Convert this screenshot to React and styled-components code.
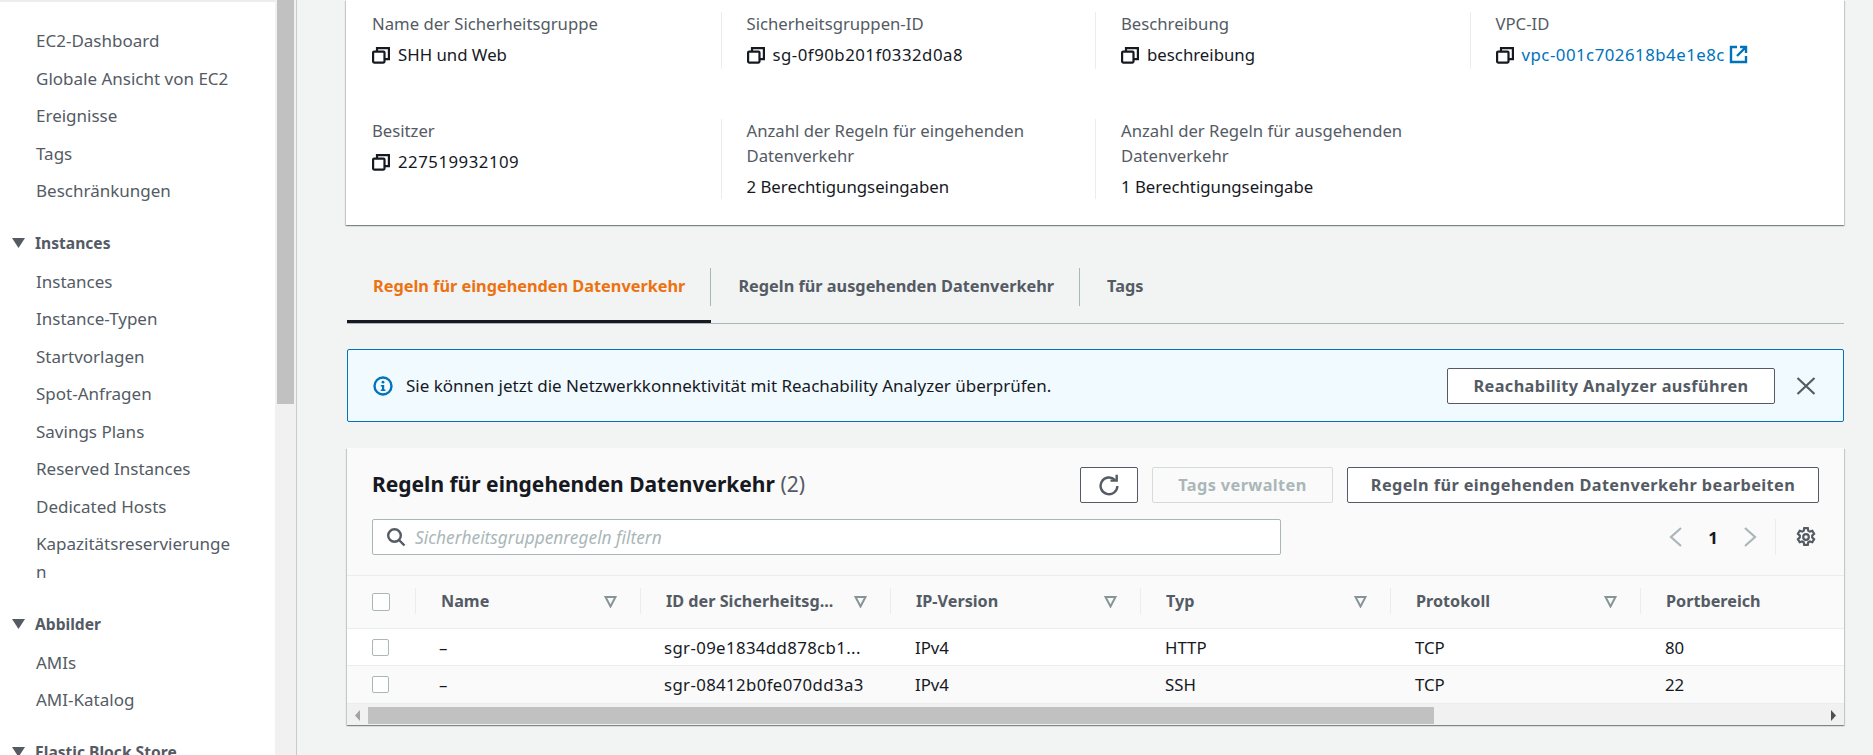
import React from "react";
import styled, { createGlobalStyle } from "styled-components";

const Global = createGlobalStyle`
  html, body {
    margin: 0;
    height: 100%;
    overflow: hidden;
    background: #f2f3f3;
  }
  * { box-sizing: border-box; }
`;

const Page = styled.div`
  display: flex;
  height: 755px;
  overflow: hidden;
  font-family: "Noto Sans", "Liberation Sans", sans-serif;
  font-size: 16.8px;
  color: #16191f;
`;

const Sidebar = styled.nav`
  width: 275px;
  flex-shrink: 0;
  background: #fff;
  border-top: 2px solid #eaeded;
  padding-top: 20px;
  overflow: hidden;
  font-size: 17px;
`;

const SideTrack = styled.div`
  width: 22px;
  flex-shrink: 0;
  background: #f1f1f1;
  border-right: 1px solid #c6cccc;
  padding: 0 2px;
`;

const SideThumb = styled.div`
  height: 404px;
  background: #c1c1c1;
`;

const SideItem = styled.div`
  padding: 5px 0 4.5px 36px;
  width: 231px;
  line-height: 28px;
  color: #545b64;
  overflow-wrap: anywhere;
`;

const SideGroup = styled.div`
  display: flex;
  align-items: center;
  gap: 10px;
  padding-left: 12px;
  margin-top: 19px;
  margin-bottom: 6px;
  height: 28px;
  font-size: 15.6px;
  font-weight: 700;
  color: #545b64;
`;

const Main = styled.main`
  flex: 1;
  min-width: 0;
  padding: 0 29px 0 50px;
`;

const Details = styled.section`
  display: grid;
  grid-template-columns: repeat(4, 1fr);
  row-gap: 50px;
  height: 225px;
  margin-left: -1px;
  padding: 12px 0 0;
  background: #fff;
  box-shadow: 0 1px 1px 0 rgba(0, 28, 36, 0.3), 1px 1px 1px 0 rgba(0, 28, 36, 0.15), -1px 1px 1px 0 rgba(0, 28, 36, 0.15);
  align-content: start;
`;

const Field = styled.div`
  min-height: 57px;
  padding-left: 25px;
  border-left: 1px solid ${(p) => (p.$first ? "transparent" : "#eaeded")};
  line-height: 25px;
`;

const FieldLabel = styled.div`
  margin-top: -1px;
  color: #545b64;
  font-size: 16.7px;
`;

const FieldValue = styled.div`
  display: flex;
  align-items: center;
  gap: 8px;
  margin-top: 6px;
  height: 25px;
`;

const IdText = styled.span`
  letter-spacing: ${(p) => p.$spacing || 0.5}px;
`;

const Link = styled.a`
  color: #0073bb;
  text-decoration: none;
  letter-spacing: 0.5px;
`;

const ExternalWrap = styled.span`
  display: flex;
  margin-left: -4px;
`;

const Tabs = styled.div`
  display: flex;
  margin-top: 35px;
  border-bottom: 1px solid #aab7b8;
  height: 64px;
`;

const Tab = styled.div`
  position: relative;
  padding: 0 26px;
  height: 63px;
  display: flex;
  align-items: center;
  padding-bottom: 8px;
  font-size: 16.3px;
  font-weight: 700;
  color: ${(p) => (p.$active ? "#ec7211" : "#545b64")};
  border-bottom: 3px solid ${(p) => (p.$active ? "#16191f" : "transparent")};
  & + & {
    padding-left: 27px;
  }
  &:not(:last-child)::after {
    content: "";
    position: absolute;
    right: 0;
    top: 8px;
    height: 38px;
    border-right: 1px solid #aab7b8;
  }
`;

const Alert = styled.div`
  display: flex;
  align-items: center;
  height: 73px;
  margin-top: 25px;
  padding: 0 27px 0 25px;
  background: #f1faff;
  border: 1px solid #0073bb;
  border-radius: 2px;
  font-size: 17px;
`;

const AlertText = styled.span`
  margin-left: 13px;
  flex: 1;
`;

const Button = styled.button`
  height: 36px;
  width: ${(p) => p.$width}px;
  padding: 0;
  display: flex;
  align-items: center;
  justify-content: center;
  font: 700 16.3px "Noto Sans", "Liberation Sans", sans-serif;
  letter-spacing: 0.4px;
  color: ${(p) => (p.$disabled ? "#aab7b8" : "#545b64")};
  background: ${(p) => (p.$disabled ? "#fafafa" : "#fff")};
  border: 1px solid ${(p) => (p.$disabled ? "#d5dbdb" : "#545b64")};
  border-radius: 2px;
`;

const CloseButton = styled.span`
  display: flex;
  margin-left: 21px;
`;

const Panel = styled.section`
  margin-top: 26px;
  background: #fafafa;
  box-shadow: 0 1px 1px 0 rgba(0, 28, 36, 0.3), 1px 1px 1px 0 rgba(0, 28, 36, 0.15), -1px 1px 1px 0 rgba(0, 28, 36, 0.15);
  height: 277px;
  overflow: hidden;
`;

const PanelHead = styled.div`
  padding: 19px 25px 20px;
  height: 127px;
`;

const TitleRow = styled.div`
  display: flex;
  align-items: center;
  gap: 14px;
`;

const Title = styled.h2`
  flex: 1;
  margin: 0 0 2px;
  font-size: 21px;
  font-weight: 700;
  color: #16191f;
`;

const Count = styled.span`
  font-weight: 400;
  color: #545b64;
`;

const ToolRow = styled.div`
  display: flex;
  align-items: center;
  margin-top: 16px;
`;

const Search = styled.div`
  display: flex;
  align-items: center;
  gap: 9px;
  width: 909px;
  height: 36px;
  padding-left: 13px;
  background: #fff;
  border: 1px solid #aab7b8;
  border-radius: 2px;
  font-size: 17.3px;
  font-style: italic;
  color: #aab7b8;
`;

const Pager = styled.div`
  display: flex;
  align-items: center;
  margin-left: auto;
  height: 36px;
  width: 150px;
  font-weight: 700;
  color: #16191f;
`;

const PageNumber = styled.span`
  width: 60px;
  text-align: center;
`;

const PagerGap = styled.span`
  height: 36px;
  margin-left: 18px;
  margin-right: 20px;
  border-left: 1px solid #eaeded;
`;

const TableRow = styled.div`
  display: grid;
  grid-template-columns: 68px 225px 250px 250px 250px 250px 203px;
  height: ${(p) => p.$height}px;
  background: ${(p) => p.$bg};
  border-bottom: 1px solid #eaeded;
  align-items: center;
`;

const HeadTop = styled.div`
  border-top: 1px solid #eaeded;
`;

const HeadCell = styled.div`
  display: flex;
  align-items: center;
  justify-content: space-between;
  height: 26px;
  margin-top: -2px;
  padding: 0 23px 0 25px;
  border-left: 1px solid #eaeded;
  font-size: 16.2px;
  font-weight: 700;
  color: #545b64;
  white-space: nowrap;
`;

const Cell = styled.div`
  padding-left: ${(p) => p.$inset || 25}px;
  white-space: nowrap;
`;

const CheckCell = styled.div`
  padding-left: 25px;
  display: flex;
`;

const Check = styled.span`
  display: block;
  width: ${(p) => p.$size}px;
  height: ${(p) => p.$size}px;
  background: #fff;
  border: 1px solid #aab7b8;
  border-radius: 2px;
`;

const HScroll = styled.div`
  display: flex;
  align-items: center;
  height: 22px;
  background: #f1f1f1;
`;

const ScrollArrow = styled.span`
  width: 21px;
  display: flex;
  justify-content: center;
`;

const ScrollThumb = styled.div`
  width: 1066px;
  height: 17px;
  background: #c1c1c1;
`;

const ScrollRest = styled.div`
  flex: 1;
`;

const CopyIcon = () => (
  <svg width="18" height="18" viewBox="0 0 18 18" fill="none" stroke="#16191f" strokeWidth="2.2">
    <rect x="1.1" y="5.6" width="11.4" height="11" rx="1" />
    <path d="M5 5V2.1h11.9v11H12.5" />
  </svg>
);

const ExternalIcon = () => (
  <svg width="19" height="19" viewBox="0 0 19 19" fill="none" stroke="#0073bb" strokeWidth="2.4">
    <path d="M8 2H2v15h15v-6" />
    <path d="M11 2h6v6M17 2L8 11" />
  </svg>
);

const InfoIcon = () => (
  <svg width="20" height="20" viewBox="0 0 20 20">
    <circle cx="10" cy="10" r="8.5" fill="none" stroke="#0073bb" strokeWidth="2.4" />
    <circle cx="10" cy="6.2" r="1.4" fill="#0073bb" />
    <path d="M7.8 9h3.4v4.4h1.2v1.6H7.8v-1.6H9V10.6H7.8z" fill="#0073bb" />
  </svg>
);

const CloseIcon = () => (
  <svg width="20" height="20" viewBox="0 0 20 20" stroke="#545b64" strokeWidth="2.2">
    <path d="M1.5 2l17 16M18.5 2L1.5 18" />
  </svg>
);

const RefreshIcon = () => (
  <svg width="22" height="22" viewBox="0 0 22 22" fill="none" stroke="#545b64" strokeWidth="2.4">
    <path d="M17 6A8.4 8.4 0 1 0 19.4 12" />
    <path d="M12.5 6.6h6.2V0.8" />
  </svg>
);

const SearchIcon = () => (
  <svg width="20" height="20" viewBox="0 0 20 20" fill="none" stroke="#545b64" strokeWidth="2.4">
    <circle cx="8.5" cy="8.5" r="6.3" />
    <path d="M13 13l5.5 5.5" />
  </svg>
);

const Chevron = ({ right }) => (
  <svg width="14" height="22" viewBox="0 0 14 22" fill="none" stroke="#aab7b8" strokeWidth="2.2">
    <path d={right ? "M2 2l10 9-10 9" : "M12 2L2 11l10 9"} />
  </svg>
);

const GearIcon = () => (
  <svg width="20" height="20" viewBox="0 0 20 20" fill="none" stroke="#545b64" strokeWidth="2.2">
    <circle cx="10" cy="10" r="2.8" />
    <path d="M8.2 1.2h3.6l.5 2.5 1.6.9 2.4-.8 1.8 3.1-1.9 1.7v1.8l1.9 1.7-1.8 3.1-2.4-.8-1.6.9-.5 2.5H8.2l-.5-2.5-1.6-.9-2.4.8-1.8-3.1 1.9-1.7V8.6L1.9 6.9 3.7 3.8l2.4.8 1.6-.9z" />
  </svg>
);

const FilterIcon = () => (
  <svg width="13" height="13" viewBox="0 0 13 13" fill="none" stroke="#879596" strokeWidth="2">
    <path d="M1.5 2h10L6.5 11.5z" />
  </svg>
);

const GroupArrow = () => (
  <svg width="13" height="10" viewBox="0 0 13 10" fill="#545b64">
    <path d="M0 0h13L6.5 10z" />
  </svg>
);

const ArrowSmall = ({ right }) => (
  <svg width="5" height="11" viewBox="0 0 5 11" fill={right ? "#505050" : "#a3a3a3"}>
    <path d={right ? "M0 0l5 5.5L0 11z" : "M5 0L0 5.5 5 11z"} />
  </svg>
);

const columns = ["Name", "ID der Sicherheitsg...", "IP-Version", "Typ", "Protokoll"];

const rows = [
  { id: "sgr-09e1834dd878cb1...", type: "HTTP", port: "80", bg: "#fff", height: 37 },
  { id: "sgr-08412b0fe070dd3a3", type: "SSH", port: "22", bg: "#fafafa", height: 38 },
];

const fields = [
  { label: "Name der Sicherheitsgruppe", value: "SHH und Web", copy: true },
  { label: "Sicherheitsgruppen-ID", value: "sg-0f90b201f0332d0a8", copy: true, id: true },
  { label: "Beschreibung", value: "beschreibung", copy: true },
  { label: "VPC-ID", value: "vpc-001c702618b4e1e8c", copy: true, link: true },
  { label: "Besitzer", value: "227519932109", copy: true, id: true },
  { label: "Anzahl der Regeln für eingehenden Datenverkehr", value: "2 Berechtigungseingaben" },
  { label: "Anzahl der Regeln für ausgehenden Datenverkehr", value: "1 Berechtigungseingabe" },
];

const fieldValue = (f) => {
  if (f.link) return <Link>{f.value}</Link>;
  if (f.id) return <IdText>{f.value}</IdText>;
  return <span>{f.value}</span>;
};

const App = () => (
  <Page>
    <Global />
    <Sidebar>
      {["EC2-Dashboard", "Globale Ansicht von EC2", "Ereignisse", "Tags", "Beschränkungen"].map((t) => (
        <SideItem key={t}>{t}</SideItem>
      ))}
      <SideGroup><GroupArrow />Instances</SideGroup>
      {["Instances", "Instance-Typen", "Startvorlagen", "Spot-Anfragen", "Savings Plans", "Reserved Instances", "Dedicated Hosts", "Kapazitätsreservierungen"].map((t) => (
        <SideItem key={t}>{t}</SideItem>
      ))}
      <SideGroup><GroupArrow />Abbilder</SideGroup>
      {["AMIs", "AMI-Katalog"].map((t) => (
        <SideItem key={t}>{t}</SideItem>
      ))}
      <SideGroup><GroupArrow />Elastic Block Store</SideGroup>
    </Sidebar>
    <SideTrack><SideThumb /></SideTrack>
    <Main>
      <Details>
        {fields.map((f, i) => (
          <Field key={f.label} $first={i % 4 === 0}>
            <FieldLabel>{f.label}</FieldLabel>
            <FieldValue>
              {f.copy && <CopyIcon />}
              {fieldValue(f)}
              {f.link && <ExternalWrap><ExternalIcon /></ExternalWrap>}
            </FieldValue>
          </Field>
        ))}
      </Details>
      <Tabs>
        <Tab $active>Regeln für eingehenden Datenverkehr</Tab>
        <Tab>Regeln für ausgehenden Datenverkehr</Tab>
        <Tab>Tags</Tab>
      </Tabs>
      <Alert>
        <InfoIcon />
        <AlertText>Sie können jetzt die Netzwerkkonnektivität mit Reachability Analyzer überprüfen.</AlertText>
        <Button $width={328}>Reachability Analyzer ausführen</Button>
        <CloseButton><CloseIcon /></CloseButton>
      </Alert>
      <Panel>
        <PanelHead>
          <TitleRow>
            <Title>Regeln für eingehenden Datenverkehr <Count>(2)</Count></Title>
            <Button $width={58}><RefreshIcon /></Button>
            <Button $width={181} $disabled>Tags verwalten</Button>
            <Button $width={472}>Regeln für eingehenden Datenverkehr bearbeiten</Button>
          </TitleRow>
          <ToolRow>
            <Search><SearchIcon />Sicherheitsgruppenregeln filtern</Search>
            <Pager>
              <Chevron />
              <PageNumber>1</PageNumber>
              <Chevron right />
              <PagerGap />
              <GearIcon />
            </Pager>
          </ToolRow>
        </PanelHead>
        <HeadTop>
          <TableRow $height={53} $bg="#fafafa">
            <CheckCell><Check $size={18} /></CheckCell>
            {columns.map((c) => (
              <HeadCell key={c}>{c}<FilterIcon /></HeadCell>
            ))}
            <HeadCell>Portbereich</HeadCell>
          </TableRow>
        </HeadTop>
        {rows.map((r) => (
          <TableRow key={r.id} $height={r.height} $bg={r.bg}>
            <CheckCell><Check $size={17} /></CheckCell>
            <Cell $inset={24}>–</Cell>
            <Cell $inset={24}><IdText $spacing={0.37}>{r.id}</IdText></Cell>
            <Cell>IPv4</Cell>
            <Cell>{r.type}</Cell>
            <Cell>TCP</Cell>
            <Cell>{r.port}</Cell>
          </TableRow>
        ))}
        <HScroll>
          <ScrollArrow><ArrowSmall /></ScrollArrow>
          <ScrollThumb />
          <ScrollRest />
          <ScrollArrow><ArrowSmall right /></ScrollArrow>
        </HScroll>
      </Panel>
    </Main>
  </Page>
);

export default App;
